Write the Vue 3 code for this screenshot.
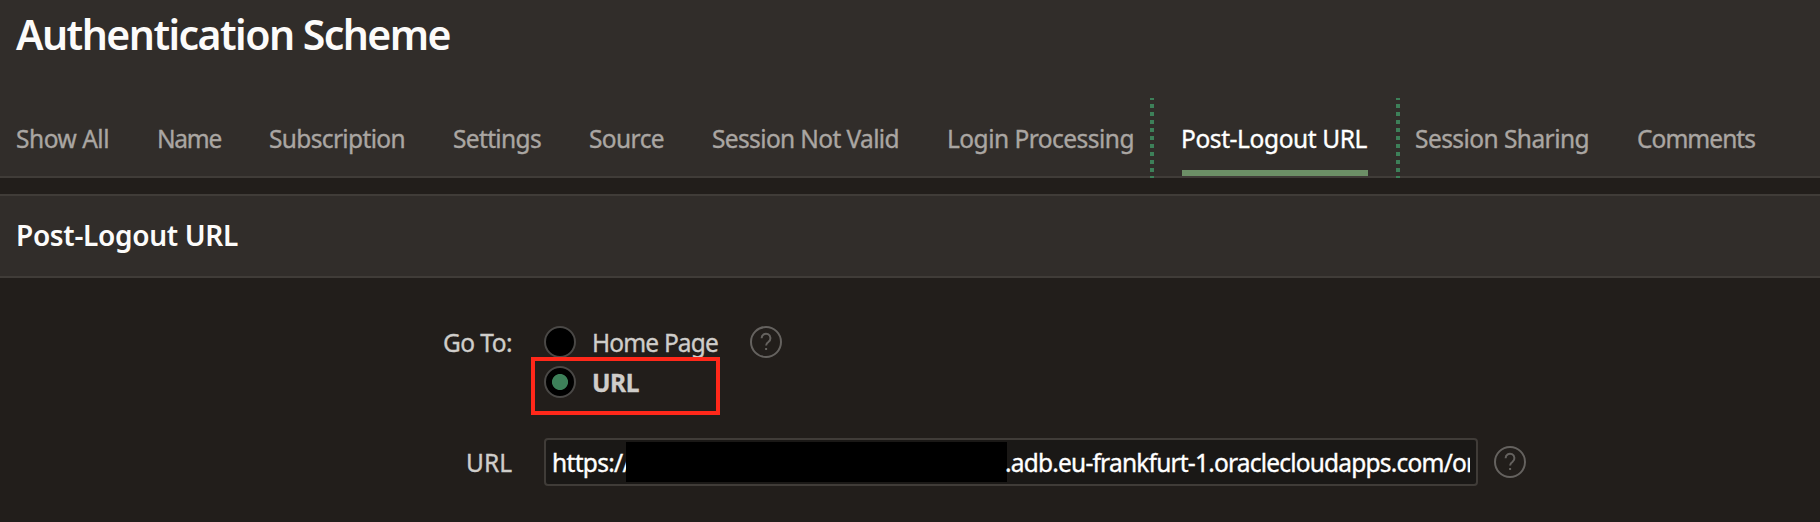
<script setup>
const tabs = [
  { label: 'Show All', width: 93 },
  { label: 'Name', width: 64 },
  { label: 'Subscription', width: 136 },
  { label: 'Settings', width: 88 },
  { label: 'Source', width: 75 },
  { label: 'Session Not Valid', width: 187 },
  { label: 'Login Processing', width: 187 },
  { label: 'Post-Logout URL', width: 186, active: true },
  { label: 'Session Sharing', width: 174 },
  { label: 'Comments', width: 118 },
]

// Spreads or tightens the letters so that a label fills the given width.
const vFit = {
  mounted(el, { value }) {
    const natural = el.getBoundingClientRect().width
    el.style.letterSpacing = (value - natural) / el.textContent.length + 'px'
  },
}
</script>

<template>
  <div class="page">
    <header class="header">
      <h1 class="title"><span v-fit="434">Authentication Scheme</span></h1>
      <nav class="tabs">
        <a
          v-for="tab in tabs"
          :key="tab.label"
          class="tab"
          :class="{ active: tab.active }"
          :style="{ width: tab.width + 'px' }"
        ><span v-fit="tab.width" class="text">{{ tab.label }}</span></a>
      </nav>
    </header>

    <section class="region">
      <h2 class="region-title"><span v-fit="222">Post-Logout URL</span></h2>
    </section>

    <form class="form">
      <div class="row goto">
        <div class="label"><span v-fit="69" class="text">Go To:</span></div>
        <div class="options">
          <label class="option">
            <i class="radio"></i><span v-fit="126" class="text">Home Page</span>
          </label>
          <label class="option selected">
            <i class="radio checked"></i><span v-fit="47" class="text">URL</span>
            <i class="highlight"></i>
          </label>
        </div>
        <svg class="help" viewBox="0 0 32 32">
          <circle cx="16" cy="16" r="15" />
          <path d="M11.6 12.2a4.4 4.4 0 1 1 7 3.5c-1.7 1.2-2.5 1.9-2.5 3.8" />
          <path d="M16.1 22v2" />
        </svg>
      </div>
      <div class="row url">
        <div class="label"><span v-fit="46" class="text">URL</span></div>
        <div class="field">
          <div class="value">
            <span class="scheme"><span v-fit="79" class="text">https://</span></span>
            <span class="redacted"></span>
            <span class="host"><span v-fit="461" class="text">.adb.eu-frankfurt-1.oraclecloudapps.com/o</span><span class="text">r</span></span>
          </div>
        </div>
        <svg class="help" viewBox="0 0 32 32">
          <circle cx="16" cy="16" r="15" />
          <path d="M11.6 12.2a4.4 4.4 0 1 1 7 3.5c-1.7 1.2-2.5 1.9-2.5 3.8" />
          <path d="M16.1 22v2" />
        </svg>
      </div>
    </form>
  </div>
</template>

<style>
body {
  margin: 0;
  background: #221e1c;
}
</style>

<style scoped>
.page {
  box-sizing: border-box;
  width: 1820px;
  height: 522px;
  overflow: hidden;
  background: #221e1b;
  color: #cfcdca;
  font-family: 'Noto Sans', 'Open Sans', sans-serif;
  font-size: 24.5px;
}
.text,
.title span,
.region-title span {
  display: inline-block;
  white-space: pre;
}
.text {
  -webkit-text-stroke: 0.35px currentColor;
}
.header {
  box-sizing: border-box;
  height: 178px;
  display: flex;
  flex-direction: column;
  justify-content: space-between;
  background: #312d2a;
  border-bottom: 2px solid #403c38;
}
.title {
  margin: 0;
  padding-left: 16px;
  line-height: 68px;
  font-size: 41px;
  font-weight: 600;
  color: #fcfbfa;
}
.tabs {
  display: flex;
  gap: 48px;
  height: 78px;
  padding-left: 16px;
}
.tab {
  position: relative;
  flex: none;
  line-height: 82px;
  white-space: nowrap;
  color: #aaa6a2;
}
.tab.active {
  color: #fff;
  box-shadow: inset 0 -6px #6c8f66;
}
.tab.active .text,
.tab.active ~ .tab .text {
  margin-left: -1px;
}
.tab.active::before,
.tab.active::after {
  content: '';
  position: absolute;
  top: 0;
  width: 4px;
  height: 80px;
  background: repeating-linear-gradient(#3d8059 0 2px, transparent 2px 6px, #3d8059 6px 8px);
}
.tab.active::before {
  left: -32px;
}
.tab.active::after {
  right: -32px;
}
.region {
  box-sizing: border-box;
  height: 84px;
  margin-top: 16px;
  border: solid #403c38;
  border-width: 2px 0;
  background: #312d2a;
}
.region-title {
  margin: 0;
  padding-left: 16px;
  line-height: 78px;
  font-size: 28px;
  font-weight: 600;
  color: #fcfbfa;
}
.form {
  padding-top: 44px;
}
.row {
  display: flex;
}
.label {
  width: 512px;
  margin-right: 32px;
  text-align: right;
}
.goto {
  align-items: flex-start;
  height: 80px;
  line-height: 42px;
}
.options {
  width: 205.5px;
}
.option {
  position: relative;
  display: flex;
  align-items: center;
  gap: 16px;
  height: 40px;
}
.option .text {
  padding-top: 2px;
}
.selected {
  font-weight: 700;
}
.radio {
  box-sizing: border-box;
  width: 32px;
  height: 32px;
  border: 2px solid #4a4846;
  border-radius: 50%;
  background: #000;
}
.checked {
  background: radial-gradient(circle, #3d8059 7.6px, #000 8.4px);
}
.highlight {
  position: absolute;
  left: -13px;
  top: -5px;
  box-sizing: border-box;
  width: 189px;
  height: 58px;
  border: 4px solid #ff281a;
}
.help {
  width: 32px;
  height: 32px;
  fill: none;
  stroke: #65625f;
  stroke-width: 2;
}
.goto .help {
  margin-top: 4px;
}
.url {
  align-items: center;
  height: 48px;
  margin-top: 36px;
}
.field {
  box-sizing: border-box;
  width: 934px;
  height: 48px;
  margin-right: 16px;
  padding: 0 6px;
  border: 2px solid #403c38;
  border-radius: 4px;
  background: #1a1816;
  color: #fff;
}
.value {
  display: flex;
  align-items: center;
  height: 44px;
  overflow: hidden;
}
.scheme {
  flex: none;
  width: 74px;
  overflow: hidden;
}
.redacted {
  flex: none;
  width: 381px;
  height: 40px;
  background: #000;
}
.host {
  flex: none;
  margin-left: -2px;
  white-space: nowrap;
}
</style>
